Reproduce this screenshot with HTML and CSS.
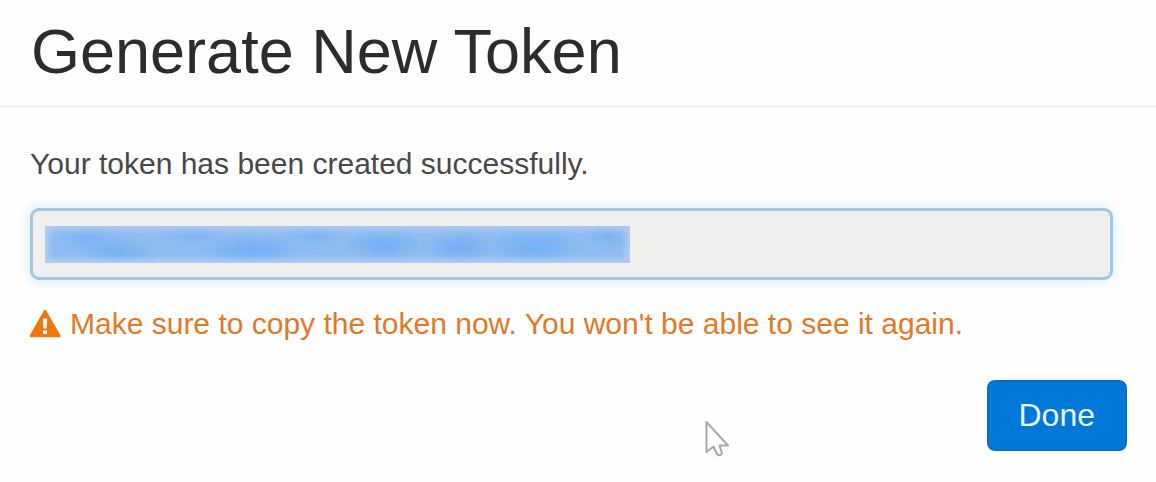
FILE: index.html
```html
<!DOCTYPE html>
<html lang="en">
<head>
<meta charset="utf-8">
<meta name="viewport" content="width=device-width, initial-scale=1">
<title>Generate New Token</title>
<link rel="stylesheet" href="styles.css">
</head>
<body>
<main class="dialog">
  <header class="dialog-header">
    <h1 class="dialog-title">Generate New Token</h1>
  </header>
  <div class="dialog-body">
    <label class="message" for="token">Your token has been created successfully.</label>
    <div class="token-field">
      <input class="token-input" id="token" type="text" readonly>
      <div class="token-redaction" aria-hidden="true"><div class="token-smudge"></div></div>
    </div>
    <p class="warning">
      <svg class="warning-icon" viewBox="0 0 32 30" aria-hidden="true">
        <path fill="#ec7812" d="M13.9 1.4a1.3 1.3 0 0 1 2.2 0L30.6 26.4a1.2 1.2 0 0 1-1 1.8H.8a1.2 1.2 0 0 1-1-1.8z"/>
        <path fill="#fff" d="M12.8 9.4h4.4l-.6 10.2h-3.2zM13 21.4h4v3.6h-4z"/>
      </svg>
      <span>Make sure to copy the token now. You won't be able to see it again.</span>
    </p>
  </div>
  <footer class="dialog-footer">
    <button class="done-button" type="button">Done</button>
  </footer>
  <svg class="pointer" viewBox="0 0 26 38" aria-hidden="true">
    <path d="M2.500 2v30l7-5.500 3.500 7.500q3 3 5-1l-2.500-7.500h8.500z" fill="#fff" stroke="#a8a8a8" stroke-width="2" stroke-linejoin="round"/>
  </svg>
</main>
</body>
</html>
```
FILE: styles.css
```css
* {
  box-sizing: border-box;
}

body {
  margin: 0;
  background: #fefefe;
  color: #484848;
  font-family: "Liberation Sans", Arial, sans-serif;
  font-size: 30px;
  line-height: 36px;
}

.dialog {
  position: relative;
}

.dialog-header {
  padding: 15px 31px 18px;
  border-bottom: 3px solid #f2f2f2;
}

.dialog-title {
  margin: 0;
  color: #2c2c2c;
  font-size: 63px;
  font-weight: 400;
  line-height: 72px;
}

.dialog-body {
  display: flex;
  flex-direction: column;
  padding: 38px 43px 0 30px;
}

.token-field {
  position: relative;
  margin: 26px 0;
}

.token-input {
  display: block;
  width: 100%;
  height: 72px;
  padding: 12px 16px;
  border: 3px solid #a1c7e3;
  border-radius: 9px;
  outline: 0;
  background: #efefee;
  box-shadow: 0 0 14px #cfeafd, inset 0 0 3px #e4f4ff;
  font: inherit;
}

.token-redaction {
  position: absolute;
  top: 18px;
  left: 15px;
  width: 54%;
  height: 37px;
  overflow: hidden;
  background: #b2cdf2;
}

.token-smudge {
  height: 100%;
  border: 4px solid #b2cdf2;
  background:
    radial-gradient(ellipse 35px 14px at 7% 25%, #7fb0f8, transparent),
    radial-gradient(ellipse 40px 15px at 12% 80%, #73aff4, transparent),
    radial-gradient(ellipse 32px 12px at 25% 10%, #7faff7, transparent),
    radial-gradient(ellipse 54px 18px at 35% 75%, #72aef5, transparent),
    radial-gradient(ellipse 30px 14px at 46% 10%, #7faff7, transparent),
    radial-gradient(ellipse 40px 16px at 58% 55%, #71aff5, transparent),
    radial-gradient(ellipse 34px 16px at 71% 60%, #74aaf6, transparent),
    radial-gradient(ellipse 50px 20px at 84% 60%, #72b0f5, transparent),
    radial-gradient(ellipse 25px 14px at 97% 15%, #7faff7, transparent),
    #8ebbf1;
  filter: blur(3px);
}

.warning {
  display: flex;
  align-items: center;
  gap: 8px;
  margin: 0;
  color: #e07a28;
}

.warning-icon {
  flex: none;
  width: 32px;
  height: 30px;
  overflow: visible;
}

.dialog-footer {
  display: flex;
  justify-content: flex-end;
  padding: 38px 29px 31px;
}

.done-button {
  padding: 16px 30px;
  border: 2px solid #0871c7;
  border-radius: 8px;
  background: #0078d7;
  color: #e8f4ff;
  font: inherit;
  font-size: 32px;
  line-height: 35px;
}

.pointer {
  position: absolute;
  top: 420px;
  left: 704px;
  width: 26px;
  height: 38px;
}
```
